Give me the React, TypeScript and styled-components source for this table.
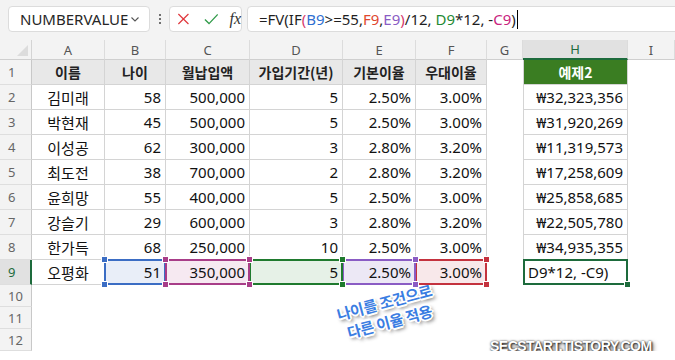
import React from 'react'
import styled, { createGlobalStyle } from 'styled-components'

const GlobalStyle = createGlobalStyle`
  html, body {
    margin: 0;
    padding: 0;
    background: #ffffff;
  }
  body {
    font-family: 'Noto Sans', 'Noto Sans CJK KR', sans-serif;
    overflow: hidden;
  }
`

const columns = ['A', 'B', 'C', 'D', 'E', 'F', 'G', 'H', 'I']
const colWidths = [32, 73, 61, 84, 93, 73, 71, 36, 105]

const headers = ['이름', '나이', '월납입액', '가입기간(년)', '기본이율', '우대이율']

const people = [
  ['김미래', '58', '500,000', '5', '2.50%', '3.00%', '₩32,323,356'],
  ['박현재', '45', '500,000', '5', '2.50%', '3.00%', '₩31,920,269'],
  ['이성공', '62', '300,000', '3', '2.80%', '3.20%', '₩11,319,573'],
  ['최도전', '38', '700,000', '2', '2.80%', '3.20%', '₩17,258,609'],
  ['윤희망', '55', '400,000', '5', '2.50%', '3.00%', '₩25,858,685'],
  ['강슬기', '29', '600,000', '3', '2.80%', '3.20%', '₩22,505,780'],
  ['한가득', '68', '250,000', '10', '2.50%', '3.00%', '₩34,935,355'],
]

// colours of the range references in row 9 (B9..F9)
const refs = [
  { value: '51', bg: '#e9eef8', line: '#3b6dc4', layer: 2 },
  { value: '350,000', bg: '#f6e9f1', line: '#a83d88', layer: 5 },
  { value: '5', bg: '#e6f1e7', line: '#1f7a2e', layer: 4 },
  { value: '2.50%', bg: '#ece8f5', line: '#8a5cc4', layer: 3 },
  { value: '3.00%', bg: '#f8e8ea', line: '#c4323e', layer: 1 },
]

const TopBar = styled.div`
  display: flex;
  align-items: center;
  height: 40px;
  padding: 0 0 2px 8px;
  box-sizing: border-box;
  background: #f3f3f3;
`

const NameBox = styled.div`
  display: flex;
  align-items: center;
  justify-content: space-between;
  width: 142px;
  height: 26px;
  box-sizing: border-box;
  padding: 0 8px 0 11px;
  background: #fff;
  border: 1px solid #dcdcdc;
  border-radius: 4px;
  font-size: 15px;
  color: #262626;
`

const Dots = styled.div`
  display: flex;
  flex-direction: column;
  gap: 2px;
  margin: 0 8px 0 9px;

  span {
    width: 2px;
    height: 2px;
    background: #444;
    border-radius: 1px;
  }
`

const FxBox = styled.div`
  display: flex;
  align-items: center;
  gap: 14px;
  width: 73px;
  height: 26px;
  box-sizing: border-box;
  padding-left: 7px;
  background: #fff;
  border: 1px solid #dcdcdc;
  border-radius: 4px;
  margin-right: 5px;
`

const Fx = styled.span`
  font-family: 'Liberation Serif', serif;
  font-style: italic;
  font-size: 16px;
  color: #333;
  margin-left: -3px;
`

const FormulaBox = styled.div`
  flex: 1;
  display: flex;
  align-items: center;
  height: 26px;
  box-sizing: border-box;
  padding-left: 11px;
  margin-right: -10px;
  background: #fff;
  border: 1px solid #dcdcdc;
  border-radius: 4px;
  font-size: 15px;
  color: #1f1f1f;
  white-space: pre;
`

const Ref = styled.span<{ $c: string }>`
  color: ${(p) => p.$c};
`

const Caret = styled.span`
  display: inline-block;
  width: 1px;
  height: 19px;
  background: #000;
  margin-left: 1px;
`

const SheetArea = styled.div`
  position: relative;
`

const Sheet = styled.div`
  display: grid;
  grid-template-columns: ${colWidths.map((w) => `${w}px`).join(' ')} 1fr;
  grid-template-rows: 20px repeat(9, 25px) repeat(3, 22px);
`

const Corner = styled.div`
  position: relative;
  background: #f3f3f3;
  border-right: 1px solid #d4d4d4;
  border-bottom: 1px solid #cfcfcf;
  box-sizing: border-box;

  &::after {
    content: '';
    position: absolute;
    right: 3px;
    bottom: 3px;
    border-left: 11px solid transparent;
    border-bottom: 11px solid #dcdcdc;
  }
`

const ColHead = styled.div<{ $active?: boolean }>`
  display: flex;
  align-items: center;
  justify-content: center;
  box-sizing: border-box;
  font-size: 13px;
  color: ${(p) => (p.$active ? '#1d6b3c' : '#555')};
  background: ${(p) => (p.$active ? '#e1e1e1' : '#f3f3f3')};
  border-right: 1px solid #dcdcdc;
  border-bottom: ${(p) => (p.$active ? '2px solid #1d6b3c' : '1px solid #cfcfcf')};
`

const RowHead = styled.div<{ $active?: boolean }>`
  display: flex;
  align-items: center;
  padding-left: 8px;
  box-sizing: border-box;
  font-size: 13px;
  color: ${(p) => (p.$active ? '#1d6b3c' : '#666')};
  background: ${(p) => (p.$active ? '#e1e1e1' : '#f3f3f3')};
  border-right: ${(p) => (p.$active ? '2px solid #1d6b3c' : '1px solid #c8c8c8')};
  border-bottom: 1px solid #dedede;
`

const Cell = styled.div<{
  $align?: 'left' | 'center' | 'right'
  $lined?: boolean
  $leftLine?: boolean
  $bg?: string
  $bold?: boolean
  $layer?: number
}>`
  position: relative;
  z-index: ${(p) => p.$layer ?? 0};
  display: flex;
  align-items: center;
  justify-content: ${(p) =>
    p.$align === 'right' ? 'flex-end' : p.$align === 'center' ? 'center' : 'flex-start'};
  padding: 0 4px;
  box-sizing: border-box;
  font-size: 15px;
  font-weight: ${(p) => (p.$bold ? 700 : 400)};
  color: #111;
  white-space: nowrap;
  background: ${(p) => p.$bg ?? '#fff'};
  border-right: ${(p) => (p.$lined ? '1px solid #d4d4d4' : 'none')};
  border-bottom: ${(p) => (p.$lined ? '1px solid #d4d4d4' : 'none')};
  border-left: ${(p) => (p.$leftLine ? '1px solid #d4d4d4' : 'none')};
`

const HeadText = styled.span<{ $light?: boolean }>`
  font-family: 'Noto Sans CJK KR', 'Noto Sans', sans-serif;
  font-size: 14px;
  font-weight: 700;
  color: ${(p) => (p.$light ? '#ffffff' : '#222')};
`

const NameText = styled.span`
  font-family: 'Noto Sans CJK KR', sans-serif;
  font-size: 15px;
  color: #111;
`

const RangeFrame = styled.div<{ $c: string }>`
  position: absolute;
  top: -1px;
  left: -1px;
  right: -1px;
  bottom: -1px;
  border: 2px solid ${(p) => p.$c};
  pointer-events: none;
`

const Handle = styled.span<{ $c: string; $x: 'l' | 'r'; $y: 't' | 'b' }>`
  position: absolute;
  width: 5px;
  height: 5px;
  background: ${(p) => p.$c};
  border: 1px solid #fff;
  ${(p) => (p.$x === 'l' ? 'left: -5px;' : 'right: -5px;')}
  ${(p) => (p.$y === 't' ? 'top: -5px;' : 'bottom: -5px;')}
`

const ActiveFrame = styled.div`
  position: absolute;
  top: -1px;
  left: -1px;
  right: -1px;
  bottom: -1px;
  border: 2px solid #1d6b3c;

  &::after {
    content: '';
    position: absolute;
    right: -5px;
    bottom: -5px;
    width: 5px;
    height: 5px;
    background: #1d6b3c;
    border: 1px solid #fff;
  }
`

const Note = styled.div`
  position: absolute;
  left: 322px;
  top: 252px;
  width: 130px;
  transform: rotate(-15deg);
  text-align: center;
  font-family: 'Noto Sans CJK KR', sans-serif;
  font-size: 15px;
  font-weight: 700;
  line-height: 20px;
  letter-spacing: -0.3px;
  color: #3a7de2;
  text-shadow:
    -1px -1px 0 #fff, 1px -1px 0 #fff, -1px 1px 0 #fff, 1px 1px 0 #fff,
    0 -2px 0 #fff, 0 2px 0 #fff, -2px 0 0 #fff, 2px 0 0 #fff,
    2px 3px 4px rgba(0, 0, 0, 0.7);
`

const Watermark = styled.div`
  position: absolute;
  left: 490px;
  top: 298px;
  font-family: 'Liberation Sans', sans-serif;
  font-size: 14px;
  font-weight: 700;
  letter-spacing: -0.5px;
  color: #fff;
  text-shadow:
    0 0 2px rgba(0, 0, 0, 0.7),
    1px 1px 2px rgba(0, 0, 0, 0.75),
    2px 2px 4px rgba(0, 0, 0, 0.5);
`

const Chevron = () => (
  <svg width="12" height="12" viewBox="0 0 12 12">
    <path d="M2.5 4.5 L6 8 L9.5 4.5" fill="none" stroke="#555" strokeWidth="1.1" />
  </svg>
)

const CancelIcon = () => (
  <svg width="14" height="14" viewBox="0 0 14 14">
    <path d="M1.5 1.5 L12.5 12.5 M12.5 1.5 L1.5 12.5" stroke="#e0393e" strokeWidth="1.3" />
  </svg>
)

const EnterIcon = () => (
  <svg width="16" height="14" viewBox="0 0 16 14">
    <path d="M1 7.5 L5.5 12 L15 2" fill="none" stroke="#2f9a48" strokeWidth="1.4" />
  </svg>
)

const App = () => {
  const dataRow = (row: string[], r: number) => {
    const rowNo = r + 2
    return (
      <React.Fragment key={rowNo}>
        <RowHead>{rowNo}</RowHead>
        <Cell $lined $align="center">
          <NameText>{row[0]}</NameText>
        </Cell>
        {row.slice(1, 6).map((v, i) => (
          <Cell key={i} $lined $align="right">
            {v}
          </Cell>
        ))}
        <Cell />
        <Cell $lined $leftLine $align="right">
          {row[6]}
        </Cell>
        <Cell />
      </React.Fragment>
    )
  }

  return (
    <>
      <GlobalStyle />
      <TopBar>
        <NameBox>
          NUMBERVALUE
          <Chevron />
        </NameBox>
        <Dots>
          <span />
          <span />
          <span />
        </Dots>
        <FxBox>
          <CancelIcon />
          <EnterIcon />
          <Fx>fx</Fx>
        </FxBox>
        <FormulaBox>
          =FV(IF<Ref $c="#d63a6e">(</Ref>
          <Ref $c="#2f6fd1">B9</Ref>&gt;=55,<Ref $c="#e0472f">F9</Ref>,
          <Ref $c="#8a5cc4">E9</Ref>
          <Ref $c="#d63a6e">)</Ref>/12, <Ref $c="#1f8a34">D9</Ref>*12, -
          <Ref $c="#c8237e">C9</Ref>)
          <Caret />
        </FormulaBox>
      </TopBar>
      <SheetArea>
        <Sheet>
          <Corner />
          {columns.map((c) => (
            <ColHead key={c} $active={c === 'H'}>
              {c}
            </ColHead>
          ))}

          <RowHead>1</RowHead>
          {headers.map((h) => (
            <Cell key={h} $lined $align="center" $bg="#e8e8e8">
              <HeadText>{h}</HeadText>
            </Cell>
          ))}
          <Cell />
          <Cell $lined $leftLine $align="center" $bg="#3a7d22">
            <HeadText $light>예제2</HeadText>
          </Cell>
          <Cell />

          {people.map(dataRow)}

          <RowHead $active>9</RowHead>
          <Cell $lined $align="center">
            <NameText>오평화</NameText>
          </Cell>
          {refs.map((ref, i) => (
            <Cell key={i} $lined $align="right" $bg={ref.bg} $layer={ref.layer}>
              {ref.value}
              <RangeFrame $c={ref.line}>
                <Handle $c={ref.line} $x="l" $y="t" />
                <Handle $c={ref.line} $x="r" $y="t" />
                <Handle $c={ref.line} $x="l" $y="b" />
                <Handle $c={ref.line} $x="r" $y="b" />
              </RangeFrame>
            </Cell>
          ))}
          <Cell />
          <Cell $lined $leftLine $align="left" $layer={6}>
            D9*12, -C9)
            <ActiveFrame />
          </Cell>
          <Cell />

          {[10, 11, 12].map((n) => (
            <React.Fragment key={n}>
              <RowHead>{n}</RowHead>
              {columns.map((c) => (
                <Cell key={c} />
              ))}
            </React.Fragment>
          ))}
        </Sheet>
        <Note>
          나이를 조건으로
          <br />
          다른 이율 적용
        </Note>
        <Watermark>SECSTART.TISTORY.COM</Watermark>
      </SheetArea>
    </>
  )
}

export default App
